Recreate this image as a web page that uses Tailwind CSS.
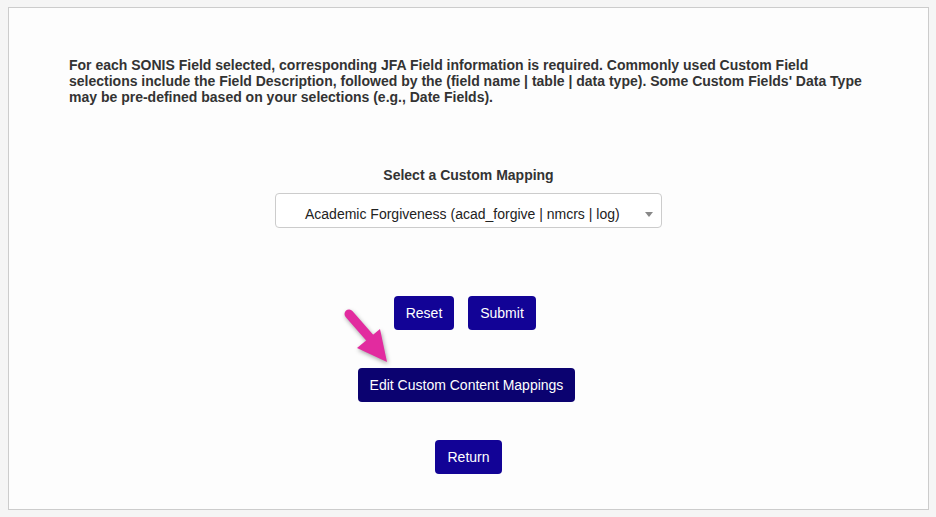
<!DOCTYPE html>
<html lang="en">
  <head>
    <meta charset="UTF-8" />
    <title>Custom Mapping</title>
    <script src="https://cdn.jsdelivr.net/npm/@tailwindcss/browser@4"></script>
  </head>
  <body class="h-[517px] overflow-hidden bg-[#f5f5f5] pt-[7px] pl-2 pr-[7px] font-['Liberation_Sans',Arial,sans-serif] text-[14px] text-[#333]">
    <main class="relative h-[503px] w-[921px] border border-[#cccccc] bg-[#fdfdfd]">
      <!-- Intro -->
      <p class="mt-[49px] ml-[60px] w-[800px] text-[14px] leading-4 font-bold">
        For each SONIS Field selected, corresponding JFA Field information is required. Commonly used Custom Field selections include the Field Description, followed by the (field name | table | data type). Some Custom Fields' Data Type may be pre-defined based on your selections (e.g., Date Fields).
      </p>

      <!-- Mapping select -->
      <div class="mt-[62px] flex flex-col items-center">
        <label class="h-4 text-center leading-4 font-bold">Select a Custom Mapping</label>
        <div class="mt-[10px] flex h-[35px] w-[387px] items-center rounded border border-[#cccccc] bg-white pt-[8px] pr-[8px] pl-[29px] text-[#222]">
          <span class="flex-1">Academic Forgiveness (acad_forgive | nmcrs | log)</span>
          <span class="h-0 w-0 border-x-[4px] border-t-[5px] border-x-transparent border-t-[#888]"></span>
        </div>
      </div>

      <!-- Buttons -->
      <div class="mt-[68px] flex justify-center gap-[14px] pr-[7px]">
        <button class="h-[34px] w-[60px] rounded bg-[#120396] text-white">Reset</button>
        <button class="h-[34px] w-[68px] rounded bg-[#120396] text-white">Submit</button>
      </div>
      <div class="mt-[38px] flex justify-center pr-[4px]">
        <button class="h-[34px] w-[217px] rounded bg-[#0b0270] text-white">Edit Custom Content Mappings</button>
      </div>
      <div class="mt-[38px] flex justify-center">
        <button class="h-[34px] w-[67px] rounded bg-[#120396] text-white">Return</button>
      </div>

      <!-- Callout arrow -->
      <svg class="absolute top-[299px] left-[333px] drop-shadow-[1px_2px_2px_rgba(0,0,0,0.35)]" width="52" height="60" viewBox="0 0 52 60">
        <path d="M7 7 L28 31" stroke="#e22b9f" stroke-width="9" stroke-linecap="round" fill="none" />
        <path d="M38 22 L45 55 L15 41 Z" fill="#e22b9f" />
      </svg>
    </main>
  </body>
</html>
